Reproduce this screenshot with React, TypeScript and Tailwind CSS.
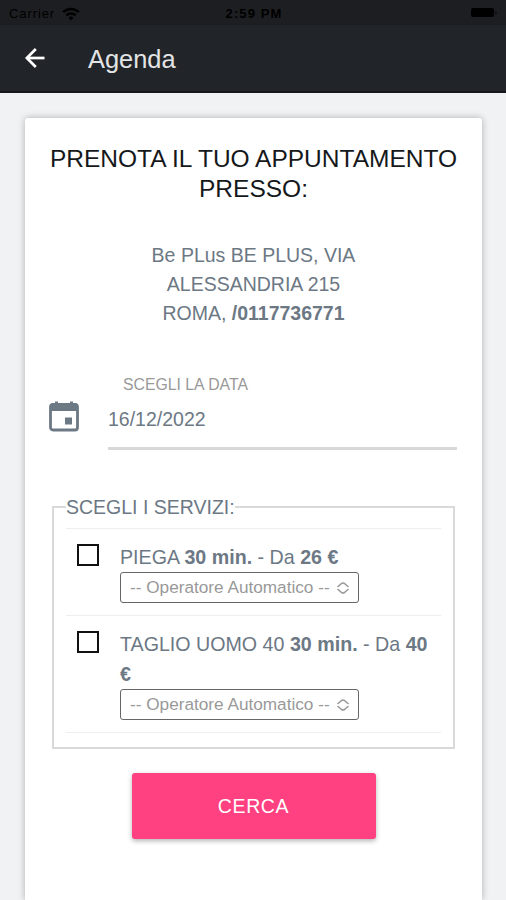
type Service = {
  id: number;
  name: string;
  duration: string;
  price: string;
};

const services: Service[] = [
  { id: 1, name: "PIEGA", duration: "30 min.", price: "26 €" },
  { id: 2, name: "TAGLIO UOMO 40", duration: "30 min.", price: "40 €" },
];

function StatusBar() {
  return (
    <div className="grid h-[25px] grid-cols-3 items-center bg-[#1d1e21] pr-[9px] pl-[9px] text-[13px] text-black">
      <div className="flex items-center gap-[7px] pt-[2px]">
        <span className="tracking-[0.9px]">Carrier</span>
        <svg width="18" height="14" viewBox="0 0 18 14" fill="none" stroke="black" strokeWidth="2.4">
          <path d="M1.2 5.2a11 11 0 0 1 15.6 0" />
          <path d="M4.3 8.4a6.6 6.6 0 0 1 9.4 0" />
          <path d="M9 13.4 6.5 10.7a3.6 3.6 0 0 1 5 0Z" fill="black" stroke="none" />
        </svg>
      </div>
      <span className="pt-[2px] pl-[2px] text-center font-bold tracking-[1.1px] whitespace-nowrap">2:59 PM</span>
      <div className="flex items-center justify-end">
        <div className="h-[9px] w-[23px] rounded-[2px] bg-black" />
        <div className="ml-px h-[4px] w-[2px] rounded-r bg-[#111113]" />
      </div>
    </div>
  );
}

function Header() {
  return (
    <header className="flex h-[68px] items-center border-b-2 border-[#15191c] bg-[#212529] pl-[25px] text-white">
      <button type="button" aria-label="Indietro">
        <svg width="20" height="20" viewBox="0 0 20 20" fill="none" stroke="white" strokeWidth="2.7">
          <path d="M19.5 10H2" />
          <path d="M10.8 1 1.8 10l9 9" />
        </svg>
      </button>
      <h1 className="mt-[3px] ml-[43px] text-[25.4px] leading-none text-[#e3e4e5]">Agenda</h1>
    </header>
  );
}

function CalendarIcon() {
  return (
    <svg className="mt-[27px] -ml-px shrink-0" width="30" height="31" viewBox="0 0 30 31" fill="none">
      <rect x="1.5" y="3.5" width="27" height="25.5" rx="2.5" stroke="currentColor" strokeWidth="2.8" />
      <path d="M1.5 3.5h27V10h-27zM6 0.5h3V4H6zM21 0.5h3V4h-3z" fill="currentColor" />
      <path d="M16 16.5h7v7h-7z" fill="currentColor" />
    </svg>
  );
}

function OperatorSelect() {
  return (
    <button
      type="button"
      className="flex h-[31px] w-[239px] items-center justify-between rounded-[3px] border border-[#666] bg-white pr-[9px] pl-[9px] text-[17.2px] whitespace-nowrap text-[#999]"
    >
      <span>-- Operatore Automatico --</span>
      <svg
        width="12"
        height="12"
        viewBox="0 0 12 12"
        fill="none"
        stroke="#999"
        strokeWidth="1.6"
        strokeLinecap="round"
        strokeLinejoin="round"
      >
        <path d="M1 4.5 4.5 1.5q1.5-1 3 0L11 4.5" />
        <path d="M1 7.5 4.5 10.5q1.5 1 3 0L11 7.5" />
      </svg>
    </button>
  );
}

function ServiceRow({ service }: { service: Service }) {
  return (
    <li className="flex border-b border-[#eeeeee] pt-[13px] pb-[12px] pl-[11px]">
      <span className="mt-[2px] size-[22px] shrink-0 border-2 border-[#111]" />
      <div className="ml-[21px] pr-2">
        <p className="text-[19.65px] leading-[30px]">
          {service.name} <b>{service.duration}</b> - Da <b>{service.price}</b>
        </p>
        <OperatorSelect />
      </div>
    </li>
  );
}

export default function App() {
  return (
    <div className="flex h-[900px] w-full flex-col overflow-hidden bg-[#f1f2f4] font-['Liberation_Sans',Arial,sans-serif] text-[19.5px] text-[#6c7884]">
      <StatusBar />
      <Header />

      <main className="mx-6 mt-[25px] ml-[25px] flex-1 rounded-t-[3px] bg-white px-[25px] pt-[26px] shadow-[0_0_7px_rgba(0,0,0,0.28)]">
        <h2 className="-mx-4 text-center text-[24.5px] leading-[30px] text-[#15181b]">
          PRENOTA IL TUO APPUNTAMENTO
          <br />
          PRESSO:
        </h2>

        <p className="mt-[37px] text-center leading-[29px]">
          Be PLus BE PLUS, VIA
          <br />
          ALESSANDRIA 215
          <br />
          ROMA, <b>/0117736771</b>
        </p>

        <div className="mt-[46px] flex">
          <CalendarIcon />
          <div className="ml-[29px] h-[76px] flex-1 border-b-[3px] border-[#d8d8d8]">
            <div className="pl-[15px] text-[15.8px] leading-[22px] text-[#999]">SCEGLI LA DATA</div>
            <div className="mt-[10px] leading-[26px]">16/12/2022</div>
          </div>
        </div>

        <fieldset className="mt-[44px] mr-[2px] ml-[2px] border-2 border-[#d7d9da] px-[12px] pb-[14px]">
          <legend className="leading-[26px]">SCEGLI I SERVIZI:</legend>
          <ul className="mt-[8px] border-t border-[#eeeeee]">
            {services.map((service) => (
              <ServiceRow key={service.id} service={service} />
            ))}
          </ul>
        </fieldset>

        <button
          type="button"
          className="mx-auto mt-[24px] block h-[66px] w-[244px] rounded-[3px] bg-[#ff4081] pt-[2px] text-[19.5px] tracking-[0.6px] text-white shadow-[0_2px_5px_rgba(0,0,0,0.3)]"
        >
          CERCA
        </button>
      </main>
    </div>
  );
}
